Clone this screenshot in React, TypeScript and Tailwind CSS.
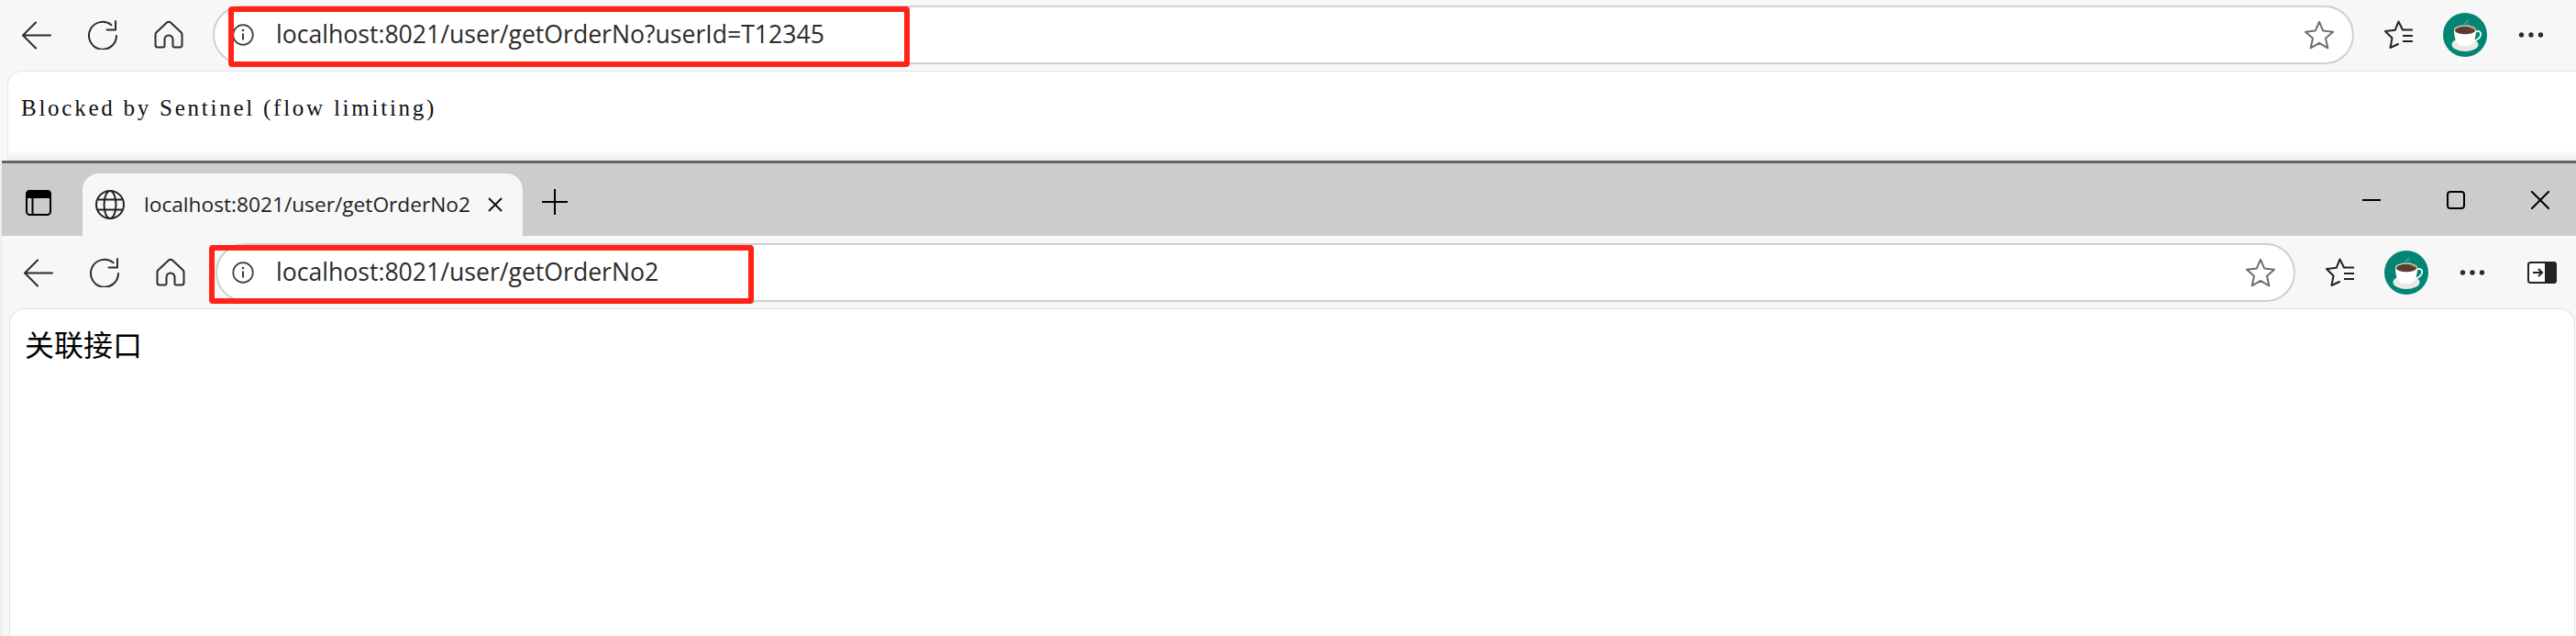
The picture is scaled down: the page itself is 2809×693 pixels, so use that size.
import type { ReactNode } from "react"

const URL_FONT = "font-['Open_Sans','Noto_Sans',sans-serif]"

function BackIcon() {
  return (
    <svg viewBox="0 0 32 32" className="w-8 h-8" fill="none" stroke="#2b2b2b" strokeWidth="2" strokeLinecap="round" strokeLinejoin="round">
      <path d="M31 16.5H1M15 2.5 1 16.5l14 14" />
    </svg>
  )
}

function ReloadIcon() {
  return (
    <svg viewBox="0 0 32 32" className="w-8 h-8" fill="none" stroke="#2b2b2b" strokeWidth="2" strokeLinecap="round" strokeLinejoin="round">
      <path d="M25.5 5.2A15 15 0 1 0 31 17" />
      <path d="M30 1v9.5H20.5" />
    </svg>
  )
}

function HomeIcon() {
  return (
    <svg viewBox="0 0 32 32" className="w-8 h-8" fill="none" stroke="#2b2b2b" strokeWidth="2" strokeLinecap="round" strokeLinejoin="round">
      <path d="M14 2.6a3 3 0 0 1 4 0l11.5 10.6a3 3 0 0 1 1 2.2V27a2.5 2.5 0 0 1-2.5 2.5h-6a1.5 1.5 0 0 1-1.5-1.5v-7a4.5 4.5 0 0 0-9 0v7a1.5 1.5 0 0 1-1.5 1.5H4A2.5 2.5 0 0 1 1.500 27V15.400a3 3 0 0 1 1-2.200z" />
    </svg>
  )
}

function InfoIcon() {
  return (
    <svg viewBox="0 0 24 24" className="w-6 h-6" fill="none" stroke="#3c3c3c" strokeWidth="1.700">
      <circle cx="12" cy="12" r="10.800" />
      <path d="M12 10.500v7" strokeWidth="2" />
      <circle cx="12" cy="7" r="1.300" fill="#3c3c3c" stroke="none" />
    </svg>
  )
}

function StarIcon() {
  return (
    <svg viewBox="0 0 32 32" className="w-8 h-8" fill="none" stroke="#6e6e6e" strokeWidth="2" strokeLinejoin="round">
      <path d="M16 1.800 20.300 11.600 31 12.700 23 19.800 25.300 30.300 16 24.900 6.700 30.300 9 19.800 1 12.700 11.700 11.600Z" />
    </svg>
  )
}

function FavoritesIcon() {
  return (
    <svg viewBox="0 0 32 32" className="w-8 h-8" fill="none" stroke="#222" strokeWidth="2" strokeLinejoin="round" strokeLinecap="round">
      <path d="M20 10.500 15.500 1.500 11.700 10.800 1 12 8.500 19.500 6.500 30 15 26" />
      <path d="M20 10.500H31M20 17H31M20 23H31" strokeLinecap="butt" />
    </svg>
  )
}

function MoreIcon() {
  return (
    <svg viewBox="0 0 32 8" className="w-8 h-2" fill="#2b2b2b">
      <circle cx="5.500" cy="4" r="2.700" />
      <circle cx="16" cy="4" r="2.700" />
      <circle cx="26.500" cy="4" r="2.700" />
    </svg>
  )
}

function CoffeeAvatar() {
  return (
    <svg viewBox="0 0 48 48" className="w-12 h-12 shrink-0">
      <circle cx="24" cy="24" r="24" fill="#028573" />
      <path d="M23 14c-2-2 1-4 3-6 1-1 2-1 1-2 3 2-1 5-2 6-1 .8-2 1.300-2 2Z" fill="#2fa08f" />
      <path d="M26 15c-1-2 2-3 4-5-.2 2-3 3-4 5Z" fill="#2fa08f" />
      <ellipse cx="24" cy="34.500" rx="14.500" ry="7.500" fill="#ebe8e6" />
      <path d="M12 19c0 9 3 16 8 17h8c5-1 8-8 8-17Z" fill="#fff" />
      <path d="M36 20.500c3-1.500 6 .5 5 4-1 3-4 5-7 6" fill="none" stroke="#fff" strokeWidth="1.800" />
      <ellipse cx="24" cy="18.500" rx="12" ry="5" fill="#f2d9b8" />
      <ellipse cx="24" cy="19" rx="11" ry="4.300" fill="#5a3d2f" />
      <path d="M27 15c4 0 7 1.500 8 3-2 .5-5-1-8-3Z" fill="#a87b56" />
    </svg>
  )
}

function SidebarIcon() {
  return (
    <svg viewBox="0 0 32 24" className="w-8 h-6 shrink-0">
      <rect x="1" y="1" width="30" height="22" rx="2.500" fill="#fff" stroke="#222" strokeWidth="2" />
      <path d="M20 1h8.500A2.500 2.500 0 0 1 31 3.500v17a2.500 2.500 0 0 1-2.500 2.500H20Z" fill="#222" stroke="#222" strokeWidth="2" />
      <path d="M6 12h10M12 8l4 4-4 4" fill="none" stroke="#222" strokeWidth="2" />
    </svg>
  )
}

function TabsIcon() {
  return (
    <svg viewBox="0 0 28 28" className="w-7 h-7" fill="none" stroke="#000" strokeWidth="2">
      <rect x="1" y="1" width="26" height="26" rx="3.500" />
      <path d="M1 4.500A3.500 3.500 0 0 1 4.500 1h19A3.500 3.500 0 0 1 27 4.500V8H1Z" fill="#000" />
      <path d="M7.500 8v19" />
    </svg>
  )
}

function GlobeIcon() {
  return (
    <svg viewBox="0 0 32 32" className="w-8 h-8" fill="none" stroke="#222" strokeWidth="2">
      <circle cx="16" cy="16" r="15" />
      <ellipse cx="16" cy="16" rx="6.500" ry="15" />
      <path d="M2.500 10.500h27M2.500 21.500h27" />
    </svg>
  )
}

type ToolbarProps = {
  url: string
  pillClass: string
  leftClass: string
  children?: ReactNode
}

function Toolbar({ url, pillClass, leftClass, children }: ToolbarProps) {
  return (
    <div className={`flex items-center bg-[#f7f7f7] ${leftClass}`}>
      <div className="flex gap-10">
        <BackIcon />
        <ReloadIcon />
        <HomeIcon />
      </div>
      <div className={`flex flex-1 items-center rounded-full border-2 border-[#cfcfcf] bg-white h-[64px] ${pillClass}`}>
        <InfoIcon />
        <span className={`flex-1 ml-6 text-[#2b2b2b] text-[26.600px] ${URL_FONT}`}>{url}</span>
        <StarIcon />
      </div>
      <div className="flex items-center gap-8">
        <FavoritesIcon />
        <CoffeeAvatar />
        <MoreIcon />
        {children}
      </div>
    </div>
  )
}

export default function App() {
  return (
    <div className="relative w-[2809px] h-[693px] overflow-hidden bg-[#eeeeee]">
      {/* first browser window, top cut off */}
      <div className="h-[175px] flex flex-col bg-[#f7f7f7]">
        <Toolbar
          url="localhost:8021/user/getOrderNo?userId=T12345"
          leftClass="h-[77px] pl-6 pr-[33px] pb-px"
          pillClass="ml-8 mr-[33px] pl-[19px] pr-[20px]"
        />
        <div className="flex-1 ml-2 rounded-tl-[16px] border-t border-l border-[#e4e4e4] bg-linear-to-b from-white from-88% to-[#ececec] pl-[14px] pt-[22px]">
          <p className="text-[25px] leading-[36px] tracking-[2.750px] text-[#111] font-['Liberation_Serif',serif]">
            Blocked by Sentinel (flow limiting)
          </p>
        </div>
      </div>
      <div className="h-[3px] ml-[2px] bg-[#646464]" />

      {/* second browser window */}
      <div className="ml-[2px] bg-[#f7f7f7]">
        <div className="flex items-end h-[79px] bg-[#cccccc]">
          <div className="flex items-center self-stretch pl-[26px] w-[88px]">
            <div className="mt-[7px]">
              <TabsIcon />
            </div>
          </div>
          <div className="flex items-center w-[480px] h-[68px] rounded-t-[18px] bg-[#f7f7f7] pl-[14px]">
            <GlobeIcon />
            <span className={`ml-[21px] text-[22.700px] whitespace-nowrap text-[#1f1f1f] ${URL_FONT}`}>
              localhost:8021/user/getOrderNo2
            </span>
            <span className="ml-auto mr-[22px] w-4 h-4">
              <svg viewBox="0 0 16 16" className="w-4 h-4" stroke="#111" strokeWidth="2">
                <path d="m1 1 14 14M15 1 1 15" />
              </svg>
            </span>
          </div>
          <div className="flex self-stretch items-center ml-[21px]">
            <svg viewBox="0 0 28 28" className="w-7 h-7 mt-[5px]" stroke="#000" strokeWidth="2">
              <path d="M14 0v28M0 14h28" />
            </svg>
          </div>
          <div className="flex self-stretch items-center ml-auto pr-[29px] gap-[72px]">
            <svg viewBox="0 0 20 20" className="w-5 h-5" stroke="#000" strokeWidth="2">
              <path d="M0 10h20" />
            </svg>
            <svg viewBox="0 0 20 20" className="w-5 h-5" fill="none" stroke="#000" strokeWidth="2">
              <rect x="1" y="1" width="18" height="18" rx="3" />
            </svg>
            <svg viewBox="0 0 20 20" className="w-5 h-5" stroke="#000" strokeWidth="2">
              <path d="m0 0 20 20M20 0 0 20" />
            </svg>
          </div>
        </div>
        <Toolbar
          url="localhost:8021/user/getOrderNo2"
          leftClass="h-[79px] pl-6 pr-[21px]"
          pillClass="ml-[33px] mr-[33px] pl-[16px] pr-[20px]"
        >
          <div className="ml-3">
            <SidebarIcon />
          </div>
        </Toolbar>
        <div className="h-[357px] ml-2 mr-px rounded-t-[16px] border-t border-x border-[#e0e0e0] bg-white pl-[16px] pt-[14px]">
          <p className="text-[32px] leading-[46px] text-black font-['Noto_Sans_CJK_SC',sans-serif]">关联接口</p>
        </div>
      </div>

      {/* red annotation boxes */}
      <div className="absolute left-[249px] top-[7px] w-[743px] h-[66px] rounded-[4px] border-[6px] border-[#ff2218]" />
      <div className="absolute left-[228px] top-[267px] w-[594px] h-[64px] rounded-[4px] border-[6px] border-[#ff2218]" />
    </div>
  )
}
